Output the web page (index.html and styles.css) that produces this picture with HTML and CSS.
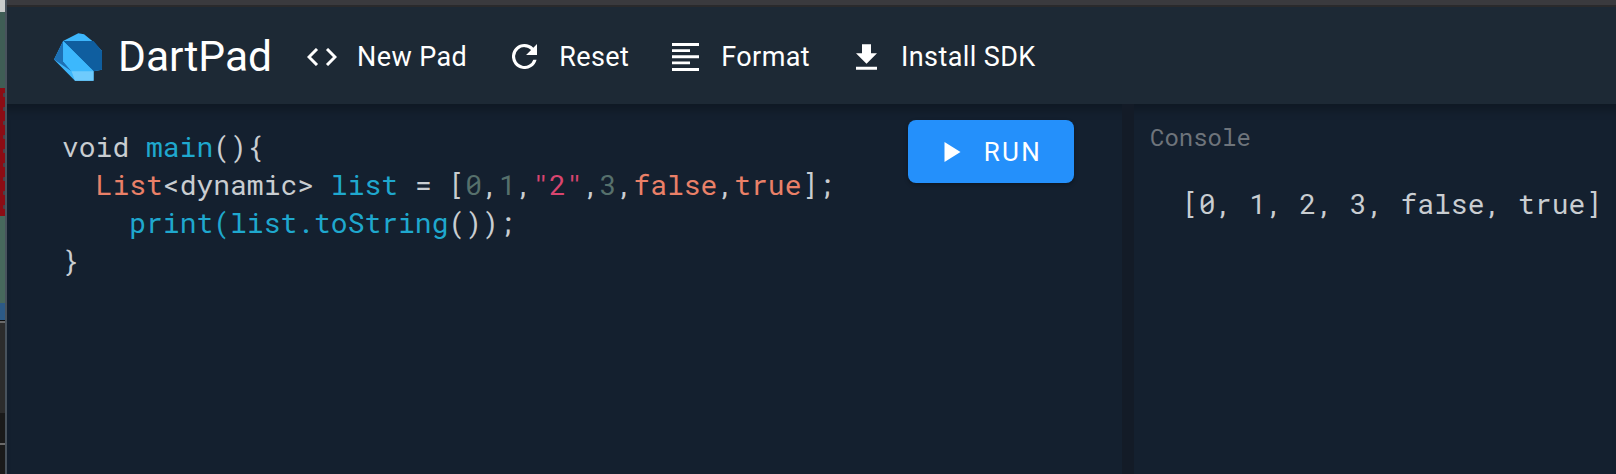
FILE: index.html
```html
<!DOCTYPE html>
<html lang="en">
<head>
<meta charset="utf-8">
<title>DartPad</title>
<link rel="stylesheet" href="styles.css">
</head>
<body>
<div class="desktop-strip">
  <div class="strip-top"></div>
  <div class="strip-green"></div>
  <div class="strip-red"></div>
  <div class="strip-lower"></div>
  <div class="strip-dock"></div>
</div>
<div class="app">
  <div class="titlebar"></div>
  <header class="toolbar">
    <div class="brand">
      <svg class="logo" viewBox="13 22 142 141">
        <path fill="#3db6fb" d="M13 100 L40 45 L85 22 L102 25 L130 48 L155 75 V130 L130 135 V163 H75 Z"/>
        <path fill="#0f5e9f" d="M40 45 H130 L155 75 V130 L130 135 Z"/>
        <path fill="#1d70b4" d="M40 45 L13 100 L65 135 L40 105 Z"/>
        <path fill="#3cb8fd" d="M40 45 L130 135 H65 L40 105 Z"/>
        <path fill="#6fcbfd" d="M65 135 H130 V163 H75 Z"/>
      </svg>
      <span class="brand-name">DartPad</span>
    </div>
    <nav class="actions">
      <a class="action">
        <svg class="icon icon-code" viewBox="0 0 30 18"><path fill="none" stroke="#fff" stroke-width="3" d="M10 1 L2 9 L10 17 M20 1 L28 9 L20 17"/></svg>
        <span>New Pad</span>
      </a>
      <a class="action">
        <svg class="icon icon-reset" viewBox="4 4 16 16"><path fill="#fff" d="M17.65 6.35A7.96 7.96 0 0 0 12 4a8 8 0 1 0 7.73 10h-2.08A6 6 0 1 1 12 6c1.66 0 3.14.69 4.22 1.78L13 11h7V4z"/></svg>
        <span>Reset</span>
      </a>
      <a class="action action-format">
        <svg class="icon icon-format" viewBox="0 0 27 28"><path fill="#fff" d="M0 0h27v3H0zM0 6.3h18v2.6H0zM0 12.3h27v3H0zM0 18.6h18v2.6H0zM0 25h27v3H0z"/></svg>
        <span>Format</span>
      </a>
      <a class="action action-install">
        <svg class="icon icon-install" viewBox="5 3 14 17"><path fill="#fff" d="M19 9h-4V3H9v6H5l7 7zM5 18v2h14v-2z"/></svg>
        <span>Install SDK</span>
      </a>
    </nav>
  </header>
  <main class="workspace">
    <section class="editor">
      <pre class="code"><span class="plain">void </span><span class="fn">main</span><span class="plain">(){</span>
<span class="plain">  </span><span class="kw">List</span><span class="plain">&lt;dynamic&gt; </span><span class="fn">list</span><span class="plain"> = [</span><span class="num">0</span><span class="plain">,</span><span class="num">1</span><span class="plain">,</span><span class="str">"2"</span><span class="plain">,</span><span class="num">3</span><span class="plain">,</span><span class="kw">false</span><span class="plain">,</span><span class="kw">true</span><span class="plain">];</span>
<span class="plain">    </span><span class="fn">print(list.toString</span><span class="plain">());</span>
<span class="plain">}</span></pre>
      <button class="run">
        <svg class="run-icon" viewBox="0 0 16 20"><path fill="#fff" d="M0 0 L16 10 L0 20 Z"/></svg>
        <span>RUN</span>
      </button>
    </section>
    <div class="splitter"></div>
    <aside class="console">
      <div class="console-title">Console</div>
      <pre class="console-output">[0, 1, 2, 3, false, true]</pre>
    </aside>
  </main>
</div>
</body>
</html>
```
FILE: styles.css
```css
* { box-sizing: border-box; }
html, body { margin: 0; height: 100%; }
body {
  display: flex;
  width: 1616px;
  height: 474px;
  overflow: hidden;
  background: #14202f;
  font-family: Roboto, sans-serif;
}
.desktop-strip {
  width: 7px;
  flex: none;
  display: flex;
  flex-direction: column;
  border-right: 2px solid #48525c;
}
.strip-top { height: 12px; background: #c9cccb; }
.strip-green { height: 76px; background: #3f5d55; }
.strip-red {
  height: 128px;
  background: radial-gradient(circle at 5px 7px, #4a4048 0 2px, transparent 2.5px) 0 0 / 5px 14px repeat-y, #8c0c14;
}
.strip-lower {
  height: 104px;
  background: linear-gradient(#47685c 0 87px, #2c5a86 87px);
}
.strip-dock {
  flex: 1;
  background: linear-gradient(#0c0c0c 0 1px, #6a6a6a 1px 3px, #2c2c2c 3px 93px, #1a1a1a 93px 123px, #6a6a6a 123px 125px, #1a1a1a 125px);
}
.app { flex: 1; min-width: 0; display: flex; flex-direction: column; }
.titlebar { height: 7px; flex: none; background: linear-gradient(#3a3a3e 0 5px, #2a2a2c 5px); }
.toolbar {
  height: 97px;
  flex: none;
  display: flex;
  align-items: center;
  background: #1d2935;
  padding: 2px 0 0 47px;
  color: #fff;
}
.brand { display: flex; align-items: center; gap: 16px; }
.logo { width: 48px; height: 48px; }
.brand-name { font-size: 42.5px; font-weight: 400; }
.actions { display: flex; align-items: center; gap: 45px; margin-left: 35px; }
.action { display: flex; align-items: center; gap: 20px; font-size: 27px; letter-spacing: 0.4px; }
.action-format { margin-left: -2px; }
.action-install { margin-left: 1px; }
.icon { flex: none; }
.icon-code { width: 30px; height: 18px; }
.icon-reset { width: 25px; height: 25px; margin-right: 2px; }
.icon-format { width: 27px; height: 28px; margin-right: 2px; }
.icon-install { width: 21px; height: 26px; margin-right: 4px; }
.workspace { flex: 1; display: flex; min-height: 0; box-shadow: inset 0 12px 10px -6px rgba(0,0,0,.25); }
.editor { position: relative; width: 1115px; flex: none; padding-top: 24px; }
.code, .console-output, .console-title { font-family: "Roboto Mono", "DejaVu Sans Mono", monospace; margin: 0; }
.code { font-size: 28px; line-height: 38px; padding-left: 55px; }
.plain { color: #c9cdd1; }
.fn { color: #1fa8ce; }
.kw { color: #ea8068; }
.num { color: #56706c; }
.str { color: #d9456f; }
.run {
  position: absolute;
  top: 16px;
  right: 48px;
  width: 166px;
  height: 63px;
  border: 0;
  padding: 0 0 0 4px;
  border-radius: 8px;
  background: #2490fb;
  color: #fff;
  font: 400 26px Roboto, sans-serif;
  letter-spacing: 2.4px;
  display: flex;
  align-items: center;
  justify-content: center;
  gap: 23px;
  box-shadow: 0 2px 4px rgba(0,0,0,.3);
}
.run-icon { width: 17px; height: 20px; }
.splitter { width: 12px; flex: none; background: #131b27; }
.console { flex: 1; padding: 19px 0 0 16px; min-width: 0; }
.console-title { font-size: 24px; line-height: 28px; color: #6e747b; }
.console-output { font-size: 28px; line-height: 38px; color: #c9cdd1; margin: 34px 0 0 32px; }
```
